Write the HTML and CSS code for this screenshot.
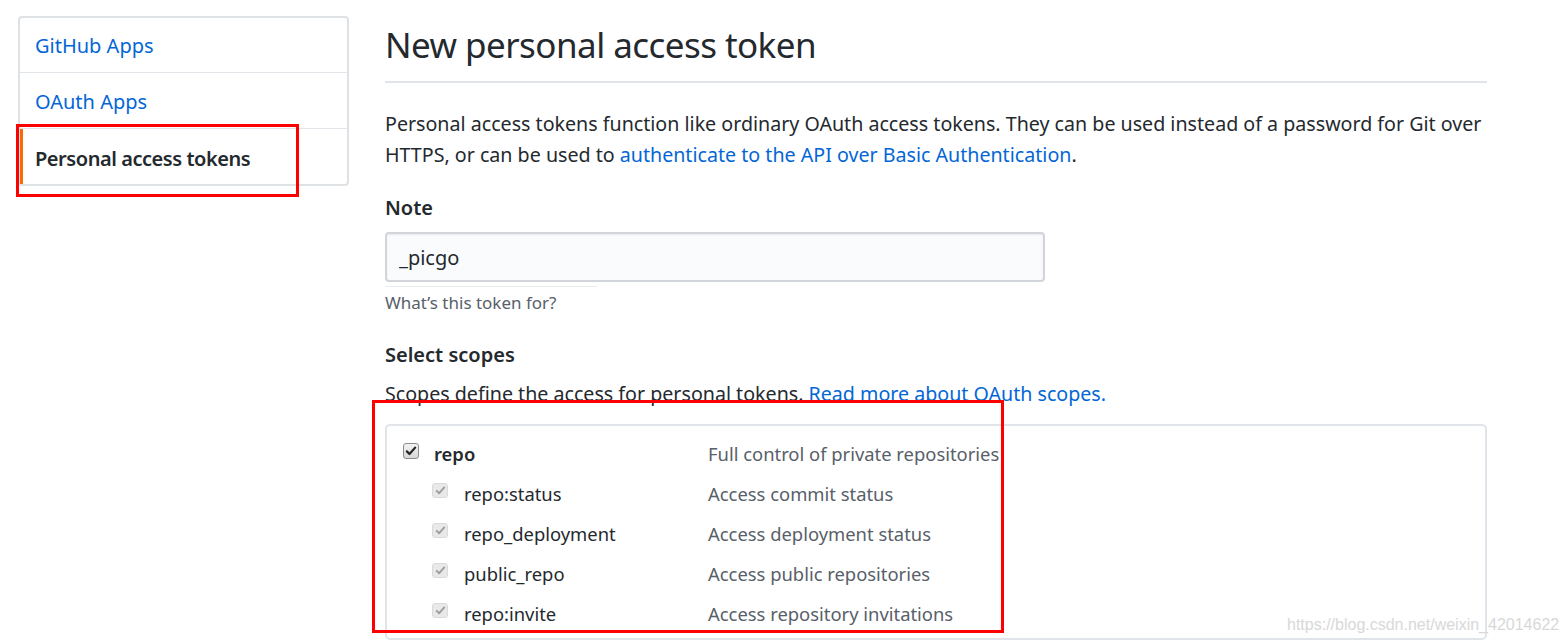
FILE: index.html
```html
<!DOCTYPE html>
<html lang="en">
<head>
<meta charset="utf-8">
<title>New personal access token</title>
<link rel="stylesheet" href="styles.css">
</head>
<body>
<div class="page">
  <nav class="menu">
    <a class="menu-item" href="#">GitHub Apps</a>
    <a class="menu-item" href="#">OAuth Apps</a>
    <a class="menu-item selected" href="#">Personal access tokens</a>
  </nav>
  <main class="main">
    <h2 class="subhead">New personal access token</h2>
    <p class="lead">Personal access tokens function like ordinary OAuth access tokens. They can be used instead of a password for Git over HTTPS, or can be used to <a href="#">authenticate to the API over Basic Authentication</a>.</p>
    <div class="form-group">
      <label class="label" for="note">Note</label>
      <input class="input" id="note" type="text" value="_picgo">
      <div class="faint-line"></div>
      <p class="hint">What’s this token for?</p>
    </div>
    <h3 class="label scopes-title">Select scopes</h3>
    <p class="scopes-desc">Scopes define the access for personal tokens. <a href="#">Read more about OAuth scopes.</a></p>
    <div class="scopes-box">
      <div class="scope-row parent">
        <span class="scope-name"><span class="cb cb-on"><svg viewBox="0 0 16 16" width="12" height="12"><path d="M2.5 8.5 L6 12 L13.5 3.5" fill="none" stroke="#262626" stroke-width="3" stroke-linecap="round" stroke-linejoin="round"/></svg></span>repo</span>
        <span class="scope-desc">Full control of private repositories</span>
      </div>
      <div class="scope-row child">
        <span class="scope-name"><span class="cb cb-dis"><svg viewBox="0 0 16 16" width="11" height="11"><path d="M2.5 8.5 L6 12 L13.5 3.5" fill="none" stroke="#a0a0a0" stroke-width="2.8" stroke-linecap="round" stroke-linejoin="round"/></svg></span>repo:status</span>
        <span class="scope-desc">Access commit status</span>
      </div>
      <div class="scope-row child">
        <span class="scope-name"><span class="cb cb-dis"><svg viewBox="0 0 16 16" width="11" height="11"><path d="M2.5 8.5 L6 12 L13.5 3.5" fill="none" stroke="#a0a0a0" stroke-width="2.8" stroke-linecap="round" stroke-linejoin="round"/></svg></span>repo_deployment</span>
        <span class="scope-desc">Access deployment status</span>
      </div>
      <div class="scope-row child">
        <span class="scope-name"><span class="cb cb-dis"><svg viewBox="0 0 16 16" width="11" height="11"><path d="M2.5 8.5 L6 12 L13.5 3.5" fill="none" stroke="#a0a0a0" stroke-width="2.8" stroke-linecap="round" stroke-linejoin="round"/></svg></span>public_repo</span>
        <span class="scope-desc">Access public repositories</span>
      </div>
      <div class="scope-row child">
        <span class="scope-name"><span class="cb cb-dis"><svg viewBox="0 0 16 16" width="11" height="11"><path d="M2.5 8.5 L6 12 L13.5 3.5" fill="none" stroke="#a0a0a0" stroke-width="2.8" stroke-linecap="round" stroke-linejoin="round"/></svg></span>repo:invite</span>
        <span class="scope-desc">Access repository invitations</span>
      </div>
    </div>
  </main>
  <div class="mark mark-menu"></div>
  <div class="mark mark-scopes"></div>
  <div class="watermark">https://blog.csdn.net/weixin_42014622</div>
</div>
</body>
</html>
```

FILE: styles.css
```css
html, body {
  margin: 0;
  padding: 0;
  background: #fff;
}

body {
  font-family: "Noto Sans", "Open Sans", sans-serif;
  color: #24292e;
}

a {
  color: #0366d6;
  text-decoration: none;
}

.page {
  position: relative;
  display: flex;
  align-items: flex-start;
  gap: 36px;
  padding: 16px 0 0 18px;
  height: 643px;
  box-sizing: border-box;
  overflow: hidden;
}

/* Sidebar menu */
.menu {
  width: 331px;
  flex: none;
  box-sizing: border-box;
  border: 2px solid #dfe2e5;
  border-radius: 4px;
  display: flex;
  flex-direction: column;
}

.menu-item {
  height: 56px;
  box-sizing: border-box;
  display: flex;
  align-items: center;
  padding: 2px 0 0 15px;
  font-size: 20px;
  color: #0366d6;
  border-bottom: 1px solid #e1e4e8;
}

.menu-item:first-child {
  height: 55px;
  padding-top: 0;
}

.menu-item:last-child {
  border-bottom: none;
  height: 55px;
  padding-top: 3px;
}

.menu-item.selected {
  border-left: 3px solid #f66a0a;
  padding-left: 12px;
  color: #24292e;
  font-weight: 600;
  letter-spacing: -0.45px;
}

/* Main column */
.main {
  width: 1102px;
  flex: none;
}

.subhead {
  margin: 6px 0 0;
  font-size: 35px;
  letter-spacing: -0.55px;
  line-height: 46px;
  font-weight: 400;
  padding-bottom: 13px;
  border-bottom: 2px solid #e1e4e8;
}

.lead {
  margin: 25px 0 0;
  font-size: 19.65px;
  line-height: 31px;
}

.form-group {
  margin-top: 23px;
  display: flex;
  flex-direction: column;
}

.label {
  display: block;
  margin: 0;
  font-size: 20px;
  line-height: 30px;
  font-weight: 600;
}

.input {
  margin-top: 9px;
  width: 660px;
  height: 50px;
  box-sizing: border-box;
  border: 2px solid #d1d5da;
  border-radius: 4px;
  background: #fafbfc;
  box-shadow: inset 0 1px 2px rgba(27, 31, 35, 0.075);
  padding: 0 12px;
  font-family: inherit;
  font-size: 20px;
  color: #24292e;
  outline: none;
}

.faint-line {
  margin-top: 4px;
  width: 212px;
  height: 1px;
  background: #e8ecf0;
}

.hint {
  margin: 3px 0 0;
  font-size: 17px;
  line-height: 25px;
  color: #586069;
}

.scopes-title {
  margin-top: 25px;
}

.scopes-desc {
  margin: 8px 0 0;
  font-size: 19.65px;
  line-height: 31px;
}

.scopes-box {
  margin-top: 15px;
  border: 2px solid #e1e4e8;
  border-radius: 5px;
  padding: 7px 0 0 16px;
  height: 216px;
  box-sizing: border-box;
}

.scope-row {
  display: flex;
  align-items: center;
  height: 40px;
  font-size: 18.4px;
}

.scope-name {
  width: 305px;
  flex: none;
  display: flex;
  align-items: center;
  box-sizing: border-box;
}

.child .scope-name {
  padding-left: 29px;
}

.parent .scope-name {
  font-weight: 600;
}

.scope-desc {
  color: #586069;
}

.cb {
  flex: none;
  display: inline-flex;
  align-items: center;
  justify-content: center;
  box-sizing: border-box;
  border-radius: 3px;
}

.cb-on {
  width: 16px;
  height: 16px;
  margin-right: 15px;
  margin-top: -4px;
  border: 1px solid #8c8c8c;
  background: linear-gradient(#f4f4f4, #d6d6d6);
}

.cb-dis {
  width: 16px;
  height: 15px;
  margin-right: 16px;
  margin-top: -6px;
  border: 1px solid #dadada;
  background: #e9e9e9;
}

/* Annotation overlays */
.mark {
  position: absolute;
  border: 3px solid #ff0000;
  box-sizing: border-box;
  pointer-events: none;
}

.mark-menu {
  left: 16px;
  top: 124px;
  width: 283px;
  height: 73px;
}

.mark-scopes {
  left: 372px;
  top: 400px;
  width: 632px;
  height: 233px;
}

.watermark {
  position: absolute;
  left: 1287px;
  top: 614px;
  font-family: "Liberation Sans", Arial, sans-serif;
  font-size: 16px;
  line-height: 22px;
  color: #d8d8d8;
  white-space: nowrap;
}
```
